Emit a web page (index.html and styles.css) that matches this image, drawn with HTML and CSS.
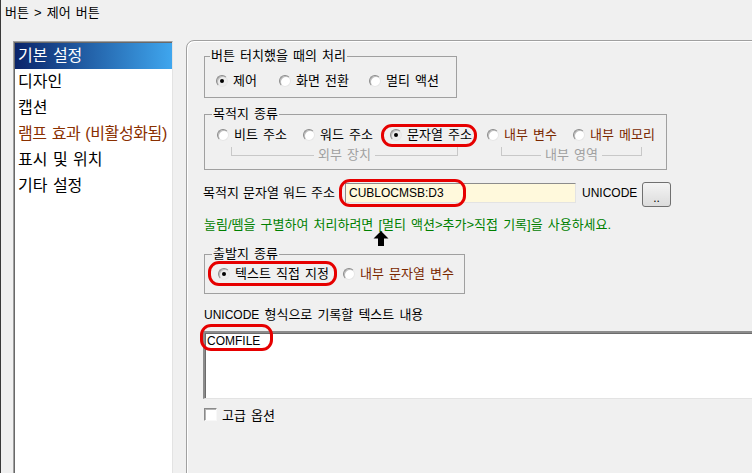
FILE: index.html
```html
<!DOCTYPE html>
<html lang="ko">
<head>
<meta charset="utf-8">
<title>버튼 &gt; 제어 버튼</title>
<link rel="stylesheet" href="styles.css">
</head>
<body>
<div class="window">
  <div class="title">버튼 &gt; 제어 버튼</div>
  <div class="main">
    <ul class="nav">
      <li class="sel">기본 설정</li>
      <li>디자인</li>
      <li>캡션</li>
      <li class="dim">램프 효과 (비활성화됨)</li>
      <li>표시 및 위치</li>
      <li>기타 설정</li>
    </ul>
    <div class="panel">
      <fieldset class="group g1">
        <legend>버튼 터치했을 때의 처리</legend>
        <div class="row r1">
          <label class="opt w63"><span class="radio on"></span>제어</label>
          <label class="opt w90"><span class="radio"></span>화면 전환</label>
          <label class="opt"><span class="radio"></span>멀티 액션</label>
        </div>
      </fieldset>

      <fieldset class="group g2">
        <legend>목적지 종류</legend>
        <div class="row r2">
          <label class="opt w86"><span class="radio"></span>비트 주소</label>
          <label class="opt w87"><span class="radio"></span>워드 주소</label>
          <label class="opt w97 mark"><span class="radio on"></span>문자열 주소<span class="hl hl-str"></span></label>
          <label class="opt w86 brown"><span class="radio"></span>내부 변수</label>
          <label class="opt brown"><span class="radio"></span>내부 메모리</label>
        </div>
        <div class="brackets">
          <div class="brk b1"><span class="l"></span><span class="t">외부 장치</span><span class="r"></span></div>
          <div class="brk b2"><span class="l"></span><span class="t">내부 영역</span><span class="r"></span></div>
        </div>
      </fieldset>

      <div class="addr">
        <span class="lab">목적지 문자열 워드 주소</span>
        <div class="input mark"><span class="lat">CUBLOCMSB:D3</span><span class="hl hl-addr"></span></div>
        <span class="uni lat">UNICODE</span>
        <button class="btn" type="button">..</button>
      </div>

      <div class="note">눌림/뗌을 구별하여 처리하려면 [멀티 액션&gt;추가&gt;직접 기록]을 사용하세요.</div>

      <svg class="arrow" width="16" height="15" viewBox="0 0 16 15" aria-hidden="true">
        <polygon points="8,0 15.5,7.5 11,7.5 11,15 5,15 5,7.5 0.5,7.5" fill="#000"/>
      </svg>

      <fieldset class="group g3">
        <legend>출발지 종류</legend>
        <div class="row r3">
          <label class="opt w125 mark"><span class="radio on"></span>텍스트 직접 지정<span class="hl hl-txt"></span></label>
          <label class="opt brown"><span class="radio"></span>내부 문자열 변수</label>
        </div>
      </fieldset>

      <div class="caption"><span class="lat">UNICODE</span> 형식으로 기록할 텍스트 내용</div>
      <div class="textbox mark"><span class="lat">COMFILE</span><span class="hl hl-com"></span></div>

      <label class="chk"><span class="box"></span>고급 옵션</label>
    </div>
  </div>
</div>
</body>
</html>
```

FILE: styles.css
```css
* { box-sizing: border-box; }
html, body { margin: 0; padding: 0; }
body {
  width: 752px;
  height: 473px;
  overflow: hidden;
  background: #f0f0f0;
  font-family: "Liberation Sans", "Noto Sans CJK KR", sans-serif;
  font-size: 13px;
  word-spacing: 1.5px;
  color: #000;
}
.lat { font-size: 12px; }
.window {
  height: 473px;
  border-left: 1px solid #3a3a3a;
}
.title {
  height: 40px;
  line-height: 26px;
  padding-left: 4px;
}
.main {
  display: flex;
  align-items: flex-start;
}
.nav {
  list-style: none;
  flex: none;
  margin: 1px 0 0 12px;
  padding: 1px 0 0 1px;
  width: 160px;
  height: 500px;
  background: #fff;
  border: 1px solid;
  border-color: #a0a0a0 #e3e3e3 #e3e3e3 #a0a0a0;
  box-shadow: inset 1px 1px 0 #696969;
  font-size: 16px;
  word-spacing: 1px;
}
.nav li {
  height: 26px;
  line-height: 25px;
  padding-left: 3px;
  white-space: nowrap;
}
.nav li.sel {
  background: linear-gradient(to right, #0a246a, #3fa6ee);
  color: #fff;
}
.nav li.dim { color: #8a3000; letter-spacing: -0.4px; }

.panel {
  flex: none;
  margin-left: 13px;
  width: 700px;
  height: 500px;
  border: 1px solid #a0a0a0;
  border-top-left-radius: 8px;
  box-shadow: inset 1px 1px 0 #fff;
  padding: 7px 0 0 17px;
  display: flex;
  flex-direction: column;
  align-items: flex-start;
}

.group {
  margin: 0;
  padding: 0;
  border: 1px solid #a0a0a0;
  min-width: 0;
}
.group legend {
  padding: 0 1px;
  margin-left: 7px;
  height: 16px;
  line-height: 16px;
}
.g1 { width: 253px; }
.g1 legend { margin-left: 5px; }
.g2 { width: 463px; margin-top: 8px; }
.g3 { width: 261px; }

.row {
  display: flex;
  align-items: center;
  height: 16px;
  box-sizing: content-box;
}
.r1 { padding: 9px 0 8px 11px; }
.r2 { padding: 5px 0 0 12px; }
.r3 { padding: 4px 0 11px 13px; }

.opt {
  display: flex;
  align-items: center;
  flex: none;
  white-space: nowrap;
  line-height: 16px;
}
.w63 { width: 63px; }
.w90 { width: 90px; }
.w86 { width: 86px; }
.w87 { width: 87px; }
.w97 { width: 97px; }
.w125 { width: 125px; }
.brown { color: #7a2800; }

.radio {
  flex: none;
  position: relative;
  width: 12px;
  height: 12px;
  margin-right: 5px;
  border-radius: 50%;
  border: 1px solid;
  border-color: #8a8a8a #e6e6e6 #e6e6e6 #8a8a8a;
  background: #fff;
  box-shadow: inset 1px 1px 0 #bcbcbc;
}
.radio.on { background: #ececec; }
.radio.on::after {
  content: "";
  position: absolute;
  left: 3px;
  top: 3px;
  width: 4px;
  height: 4px;
  border-radius: 50%;
  background: #000;
}

.brackets {
  display: flex;
  margin-top: 4px;
  padding: 0 0 6px 26px;
}
.brk {
  display: flex;
  height: 16px;
}
.b1 { width: 227px; }
.b2 { width: 141px; margin-left: 43px; }
.brk .l, .brk .r {
  flex: 1;
  height: 9px;
  border-bottom: 1px solid #c8c8c8;
}
.brk .l { border-left: 1px solid #c8c8c8; }
.brk .r { border-right: 1px solid #c8c8c8; }
.brk .t {
  padding: 0 4px;
  line-height: 16px;
  color: #a0a0a0;
  white-space: nowrap;
}

.addr {
  display: flex;
  align-items: flex-start;
  height: 25px;
  margin: 12px 0 0 -1px;
}
.addr .lab {
  width: 142px;
  margin-top: 3px;
  line-height: 16px;
  white-space: nowrap;
  word-spacing: 0.5px;
}
.input {
  width: 231px;
  height: 20px;
  margin-top: 1px;
  padding-left: 3px;
  line-height: 18px;
  background: #fff9dc;
  border: 1px solid;
  border-color: #8c8c8c #e3e3e3 #e3e3e3 #8c8c8c;
}
.uni {
  width: 60px;
  margin: 3px 0 0 6px;
  line-height: 16px;
}
.btn {
  width: 29px;
  height: 25px;
  padding: 6px 0 0;
  border: 1px solid #707070;
  border-radius: 3px;
  background: linear-gradient(#f4f4f4, #dcdcdc);
  font: 12px "Liberation Sans", sans-serif;
  line-height: 14px;
  color: #000;
}

.note {
  margin-top: 10px;
  line-height: 16px;
  color: #008000;
  white-space: nowrap;
}
.arrow {
  display: block;
  margin: -2px 0 0 169px;
}

.caption {
  margin-top: 13px;
  line-height: 16px;
}
.textbox {
  width: 560px;
  height: 68px;
  margin: 8px 0 0 -1px;
  padding: 1px 0 0 2px;
  line-height: 14px;
  background: #fff;
  border-style: solid;
  border-width: 2px 0 1px 2px;
  border-color: #8c8c8c #e3e3e3 #e3e3e3 #8c8c8c;
  box-shadow: inset 1px 1px 0 #6c6c6c;
}

.chk {
  display: flex;
  align-items: center;
  height: 16px;
  margin-top: 7px;
}
.chk .box {
  width: 13px;
  height: 13px;
  margin-right: 5px;
  background: #fff;
  border: 1px solid;
  border-color: #8a8a8a #f8f8f8 #f8f8f8 #8a8a8a;
  box-shadow: inset 1px 1px 0 #b4b4b4;
}

/* red annotation outlines drawn over content */
.mark { position: relative; }
.hl {
  position: absolute;
  border: 3px solid #e60000;
  border-radius: 11px;
  pointer-events: none;
}
.hl-str { left: -9px; top: -3px; width: 96px; height: 23px; }
.hl-addr { left: -7px; top: -5px; width: 127px; height: 28px; }
.hl-txt { left: -10px; top: -5px; width: 129px; height: 25px; }
.hl-com { left: -5px; top: -9px; width: 73px; height: 27px; }
```
